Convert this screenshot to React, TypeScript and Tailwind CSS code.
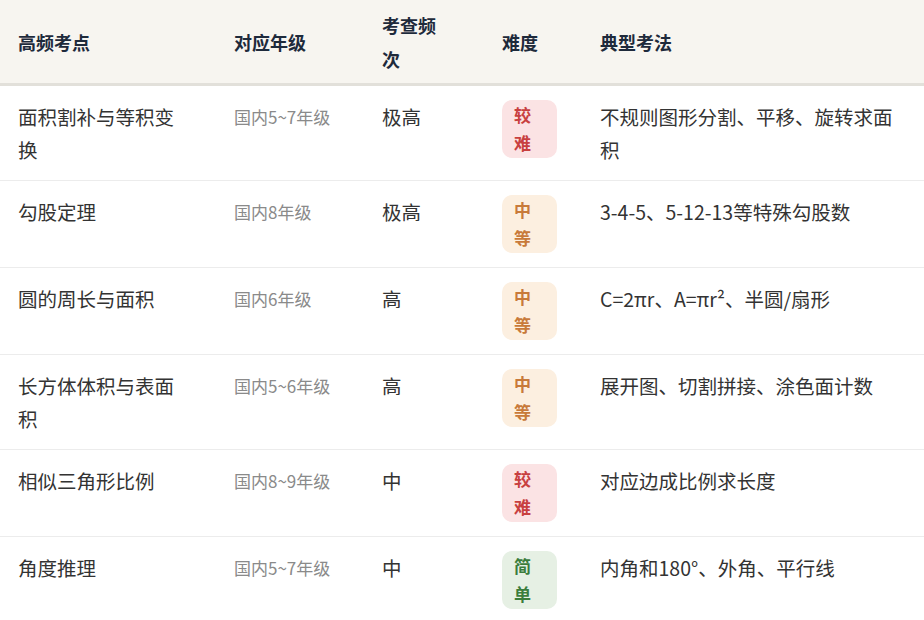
const rows = [
  { topic: '面积割补与等积变换', grade: '国内5~7年级', freq: '极高', level: 'hard', method: '不规则图形分割、平移、旋转求面积' },
  { topic: '勾股定理', grade: '国内8年级', freq: '极高', level: 'mid', method: '3-4-5、5-12-13等特殊勾股数' },
  { topic: '圆的周长与面积', grade: '国内6年级', freq: '高', level: 'mid', method: 'C=2πr、A=πr²、半圆/扇形' },
  { topic: '长方体体积与表面积', grade: '国内5~6年级', freq: '高', level: 'mid', method: '展开图、切割拼接、涂色面计数' },
  { topic: '相似三角形比例', grade: '国内8~9年级', freq: '中', level: 'hard', method: '对应边成比例求长度' },
  { topic: '角度推理', grade: '国内5~7年级', freq: '中', level: 'easy', method: '内角和180°、外角、平行线' },
]

const badge: Record<string, { text: string; cls: string }> = {
  hard: { text: '较难', cls: 'bg-[#fbe3e4] text-[#c8403f]' },
  mid: { text: '中等', cls: 'bg-[#fcefe0] text-[#c87a3a]' },
  easy: { text: '简单', cls: 'bg-[#e6f0e4] text-[#3b7d3c]' },
}

const grid = 'grid grid-cols-[216px_148px_120px_98px_1fr]'

export default function App() {
  return (
    <div className="w-[924px] h-[620px] overflow-hidden bg-white" style={{ fontFamily: '"Noto Sans CJK SC", "Noto Sans", sans-serif' }}>
      <div className={`${grid} h-[86px] items-center bg-[#f7f5f0] border-b-[3px] border-[#e2e0da] text-[18px] font-bold leading-[34px] text-[#1e2a3b]`}>
        <div className="pl-[18px]">高频考点</div>
        <div className="pl-[18px]">对应年级</div>
        <div className="pl-[18px]"><div className="w-[58px]">考查频次</div></div>
        <div className="pl-[18px]">难度</div>
        <div className="pl-[18px]">典型考法</div>
      </div>
      {rows.map((r, i) => {
        const b = badge[r.level]
        return (
          <div key={i} className={`${grid} items-start border-b border-[#ececec] py-[14px] text-[19.5px] leading-[33px] text-[#333]`}>
            <div className="pl-[18px]"><div className="w-[165px]">{r.topic}</div></div>
            <div className="pl-[18px] text-[17px] text-[#8a8a8a] leading-[33px]">{r.grade}</div>
            <div className="pl-[18px]">{r.freq}</div>
            <div className="pl-[18px]">
              <div className={`w-[55px] rounded-[10px] px-[12px] py-[1px] text-[17px] font-bold leading-[28px] ${b.cls}`}>
                {b.text}
              </div>
            </div>
            <div className="pl-[18px]"><div className="w-[305px]">{r.method}</div></div>
          </div>
        )
      })}
    </div>
  )
}
